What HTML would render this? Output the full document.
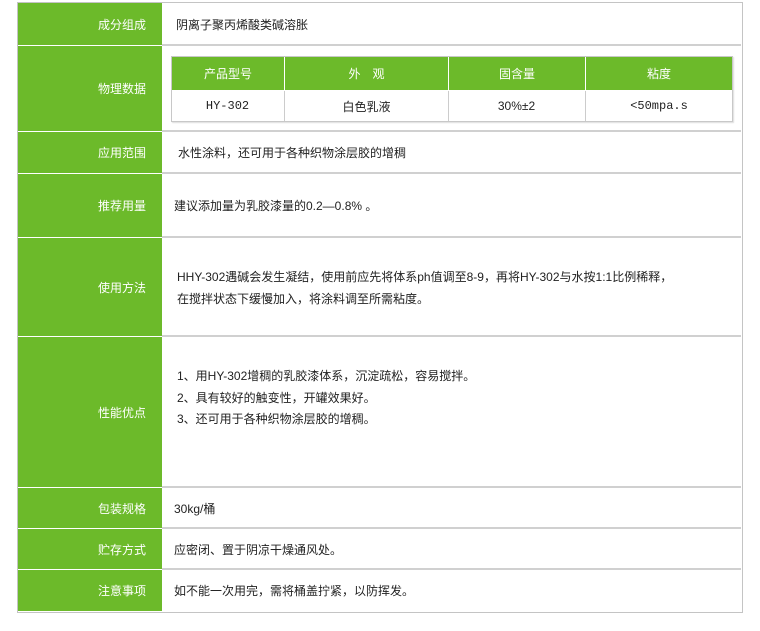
<!DOCTYPE html>
<html><head><meta charset="utf-8"><style>
body{margin:0;width:760px;height:631px;background:#fff;position:relative;font-family:"Liberation Sans","Noto Sans CJK SC","WenQuanYi Zen Hei",sans-serif;font-size:12px;color:#222;overflow:hidden}
.a{position:absolute}
.l{position:absolute;left:18px;width:144px;background:#6cba2a;color:#fff;text-align:right;box-sizing:border-box;padding-right:16px;display:flex;align-items:center;justify-content:flex-end}
.r{position:absolute;left:162px;width:579px;display:flex;align-items:center;padding-left:12px;box-sizing:border-box}
.hl{position:absolute;left:162px;width:579px;height:2px;background:#d0d0d0}
.wl{position:absolute;left:18px;width:144px;height:1px;background:#fff}
.t{position:absolute;display:flex;align-items:center;justify-content:center}
.th{background:#6cba2a;color:#fff;top:57px;height:33px}
.td{top:91px;height:30px}
</style></head><body>
<div class="a" style="left:17px;top:2px;width:724px;height:609px;border:1px solid #c4c4c4"></div>
<div class="l" style="top:3px;height:42px">成分组成</div>
<div class="r" style="top:3px;height:42px;padding-left:14px">阴离子聚丙烯酸类碱溶胀</div>
<div class="l" style="top:46px;height:85px">物理数据</div>
<div class="l" style="top:132px;height:41px">应用范围</div>
<div class="r" style="top:132px;height:41px;padding-left:16px">水性涂料，还可用于各种织物涂层胶的增稠</div>
<div class="l" style="top:174px;height:63px">推荐用量</div>
<div class="r" style="top:174px;height:63px">建议添加量为乳胶漆量的0.2—0.8% 。</div>
<div class="l" style="top:238px;height:98px">使用方法</div>
<div class="a" style="left:177px;top:266px;line-height:22px">HHY-302遇碱会发生凝结，使用前应先将体系ph值调至8-9，再将HY-302与水按1:1比例稀释，<br>在搅拌状态下缓慢加入，将涂料调至所需粘度。</div>
<div class="l" style="top:337px;height:150px">性能优点</div>
<div class="a" style="left:177px;top:366px;line-height:21.5px">1、用HY-302增稠的乳胶漆体系，沉淀疏松，容易搅拌。<br>2、具有较好的触变性，开罐效果好。<br>3、还可用于各种织物涂层胶的增稠。</div>
<div class="l" style="top:488px;height:40px">包装规格</div>
<div class="r" style="top:488px;height:40px">30kg/桶</div>
<div class="l" style="top:529px;height:40px">贮存方式</div>
<div class="r" style="top:529px;height:40px">应密闭、置于阴凉干燥通风处。</div>
<div class="l" style="top:570px;height:41px">注意事项</div>
<div class="r" style="top:570px;height:41px">如不能一次用完，需将桶盖拧紧，以防挥发。</div>
<div class="wl" style="top:45px"></div><div class="wl" style="top:131px"></div><div class="wl" style="top:173px"></div><div class="wl" style="top:237px"></div><div class="wl" style="top:336px"></div><div class="wl" style="top:487px"></div><div class="wl" style="top:528px"></div><div class="wl" style="top:569px"></div>
<div class="hl" style="top:44px"></div><div class="hl" style="top:130px"></div><div class="hl" style="top:172px"></div><div class="hl" style="top:236px"></div><div class="hl" style="top:335px"></div><div class="hl" style="top:486px"></div><div class="hl" style="top:527px"></div><div class="hl" style="top:568px"></div>
<div class="a" style="left:171px;top:56px;width:562px;height:66px;border:1px solid #c8c8c8;box-sizing:border-box;box-shadow:1px 1px 1px #ddd"></div>
<div class="t th" style="left:172px;width:112px">产品型号</div>
<div class="t th" style="left:285px;width:163px">外　观</div>
<div class="t th" style="left:449px;width:136px">固含量</div>
<div class="t th" style="left:586px;width:146px">粘度</div>
<div class="a" style="left:284px;top:91px;width:1px;height:30px;background:#ccc"></div>
<div class="a" style="left:448px;top:91px;width:1px;height:30px;background:#ccc"></div>
<div class="a" style="left:585px;top:91px;width:1px;height:30px;background:#ccc"></div>
<div class="t td" style="left:172px;width:111px;font-family:'Liberation Mono',monospace">HY-302</div>
<div class="t td" style="left:285px;width:163px">白色乳液</div>
<div class="t td" style="left:449px;width:135px">30%±2</div>
<div class="t td" style="left:586px;width:146px;font-family:'Liberation Mono','Noto Sans CJK SC',monospace">&lt;50mpa.s</div>
</body></html>
